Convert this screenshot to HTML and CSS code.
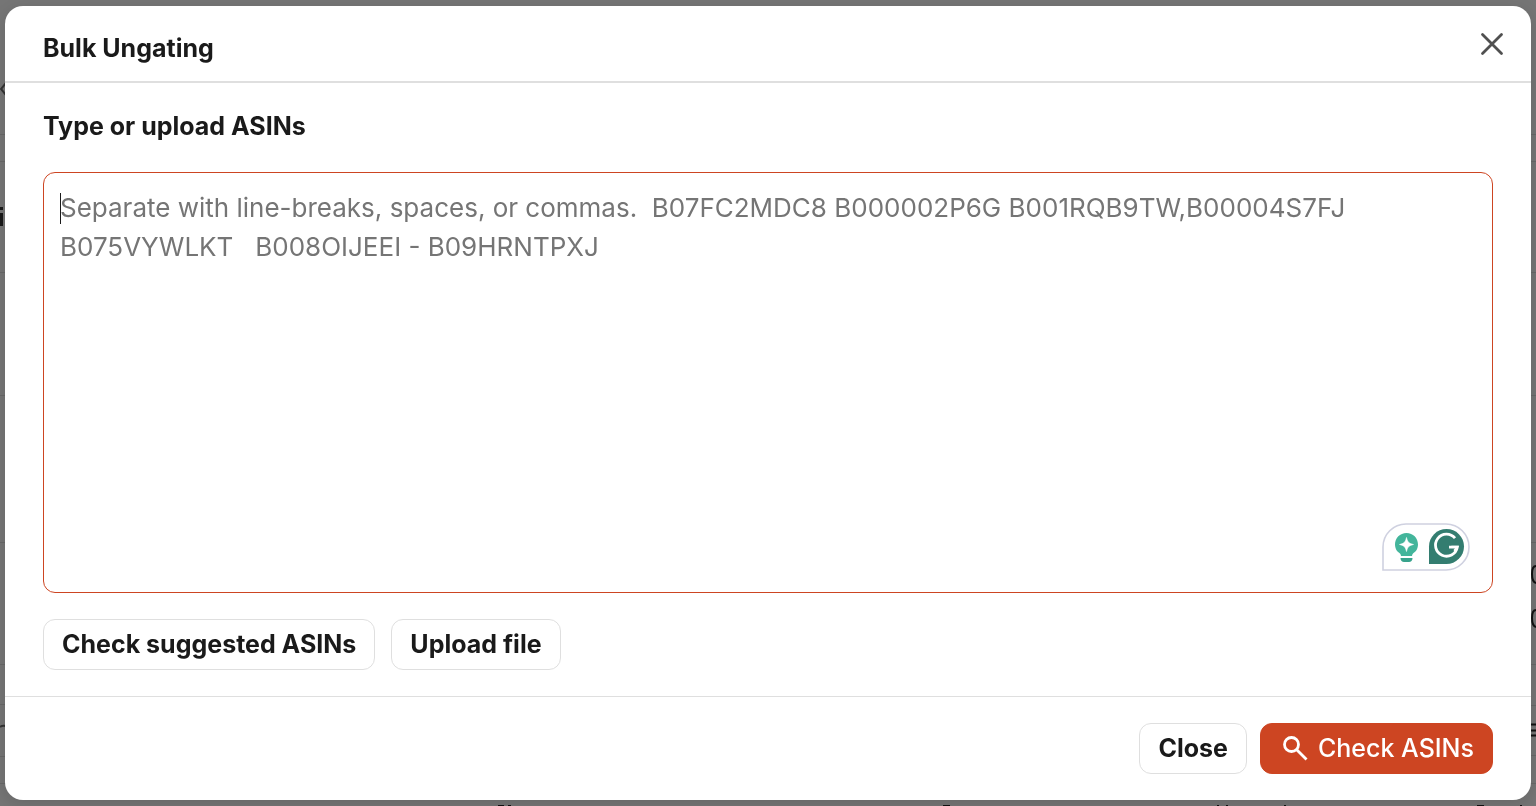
FILE: index.html
```html
<!DOCTYPE html>
<html lang="en">
<head>
<meta charset="utf-8">
<meta name="viewport" content="width=device-width, initial-scale=1">
<title>Bulk Ungating</title>
<link rel="stylesheet" href="styles.css">
</head>
<body class="page">
  <div class="backdrop" aria-hidden="true">
    <svg class="backdrop-edge" width="6" height="806" viewBox="0 0 6 806">
      <g stroke="#686868"><path d="M0 134.5H6M0 161.5H6M0 272.5H6M0 395.5H6M0 542.5H6M0 664.5H6M0 704.5H6M0 756.5H6M0 783.5H6"/></g>
      <path d="M6 83L1 89L6 95" fill="none" stroke="#333" stroke-width="2"/>
      <path d="M0 207H3V210H0zM0 213H3V226H0z" fill="#191919"/>
      <path d="M0 727Q2 725 6 726" fill="none" stroke="#333" stroke-width="2"/>
    </svg>
    <svg class="backdrop-edge backdrop-right" width="6" height="806" viewBox="0 0 6 806">
      <g stroke="#686868"><path d="M0 134.5H6M0 161.5H6M0 272.5H6M0 395.5H6M0 542.5H6M0 664.5H6M0 705.5H6M0 755.5H6M0 783.5H6"/></g>
      <path d="M6 566Q2 566 2 574Q2 582 6 583M6 610Q2 610 2 618Q2 626 6 627" fill="none" stroke="#111" stroke-width="2"/>
      <path d="M0 724.5H6M0 730.5H6M1 735.5H6" fill="none" stroke="#111" stroke-width="2"/>
    </svg>
    <svg class="backdrop-bottom" width="1536" height="2" viewBox="0 0 1536 2">
      <path d="M498 1.5H504M508 1.5H511M943 1.5H950M1217 1.5H1219M1226 1.5H1228M1284 1.5H1286M1477 1.5H1484M1520 1.5H1522" stroke="#111" stroke-width="1"/>
    </svg>
  </div>

  <main class="modal" role="dialog" aria-modal="true" aria-labelledby="modal-title">
    <header class="modal-header">
      <h1 class="modal-title" id="modal-title">Bulk Ungating</h1>
      <button class="icon-button" type="button" aria-label="Close dialog">
        <svg width="24" height="24" viewBox="0 0 24 24" fill="none" stroke="#505050" stroke-width="2.8" stroke-linecap="round"><path d="M2.500 2.500L21.500 21.500M21.500 2.500L2.500 21.500"/></svg>
      </button>
    </header>

    <section class="modal-body">
      <label class="field-label" for="asins">Type or upload ASINs</label>
      <div class="field">
        <textarea class="field-input" id="asins" placeholder="Separate with line-breaks, spaces, or commas.  B07FC2MDC8 B000002P6G B001RQB9TW,B00004S7FJ&#10;B075VYWLKT   B008OIJEEI - B09HRNTPXJ"></textarea>
        <span class="caret"></span>
        <div class="assistant">
          <svg width="88" height="48" viewBox="0 0 88 48" role="img" aria-label="Writing assistant">
            <path d="M1 47V24A23 23 0 0 1 24 1H64A23 23 0 0 1 64 47Z" fill="#fff" stroke="#cfd1e0" stroke-width="1.6"/>
            <path d="M24.500 10C31 10 36 15 36 21.500C36 26 33.500 29 31 30.500Q30 31.500 30 33H19Q19 31.500 18 30.500C15.500 29 13 26 13 21.500C13 15 18 10 24.500 10Z" fill="#43b59b"/>
            <path d="M24.500 14.500C25.500 19 27 20.500 31.500 21.500C27 22.500 25.500 24 24.500 28.500C23.500 24 22 22.500 17.500 21.500C22 20.500 23.500 19 24.500 14.500Z" fill="#fff" stroke="#fff" stroke-width=".6"/>
            <path d="M18.500 35H30.500C30.500 37.500 29 39 27 39H22C20 39 18.500 37.500 18.500 35Z" fill="#38a38c"/>
            <path d="M47 41V23.500A17.500 17.500 0 1 1 64.500 41Z" fill="#337d70"/>
            <path d="M73 15.200A11 11 0 1 0 75.300 24.200H67" fill="none" stroke="#fff" stroke-width="2.800"/>
            <path d="M69 22.800H76.800L73.500 30L71.500 27L73.500 24.500Z" fill="#fff"/>
          </svg>
        </div>
      </div>
      <div class="actions">
        <button class="button" type="button">Check suggested ASINs</button>
        <button class="button" type="button">Upload file</button>
      </div>
    </section>

    <footer class="modal-footer">
      <button class="button" type="button">Close</button>
      <button class="button button-primary" type="button">
        <svg width="26" height="26" viewBox="0 0 26 26" fill="none" stroke="#fff" stroke-width="2.8"><circle cx="9.500" cy="8.500" r="7"/><path d="M14.500 13.500L24.500 23.500"/></svg>
        Check ASINs
      </button>
    </footer>
  </main>
</body>
</html>
```
FILE: styles.css
```css
* {
  box-sizing: border-box;
}

.page {
  display: flex;
  min-height: 100vh;
  margin: 0;
  padding: 6px 5px;
  background: #757575;
  color: #1a1a1a;
  font-family: Inter, "Liberation Sans", sans-serif;
  font-size: 26px;
  font-variation-settings: "opsz" 32;
  line-height: 39px;
}

.backdrop {
  position: fixed;
  inset: 0;
  overflow: hidden;
}

.backdrop-edge {
  position: absolute;
  top: 0;
  left: 0;
}

.backdrop-right {
  right: 0;
  left: auto;
}

.backdrop-bottom {
  position: absolute;
  bottom: 0;
  left: 0;
}

.modal {
  position: relative;
  display: flex;
  flex: 1;
  flex-direction: column;
  overflow: hidden;
  border-radius: 18px;
  background: #fff;
  box-shadow: 0 4px 16px rgba(0, 0, 0, 0.12);
}

.modal-header {
  display: flex;
  align-items: flex-start;
  justify-content: space-between;
  padding: 26px 27px 16px 38px;
  border-bottom: 2px solid #dfdfdf;
}

.modal-title {
  margin: 0;
  font-size: 25px;
  font-weight: 700;
  line-height: 33px;
}

.icon-button {
  display: flex;
  padding: 0;
  border: 0;
  background: none;
}

.modal-body {
  display: flex;
  flex: 1;
  flex-direction: column;
  padding: 24px 38px 26px;
}

.field-label {
  font-size: 25px;
  font-weight: 700;
}

.field {
  position: relative;
  display: flex;
  flex: 1;
  margin-top: 26px;
}

.field-input {
  flex: 1;
  min-width: 0;
  padding: 15px 16px;
  border: 1px solid #cd4522;
  border-radius: 12px;
  outline: 0;
  background: #fff;
  color: #1a1a1a;
  font: inherit;
  font-variation-settings: inherit;
  resize: none;
}

.field-input::placeholder {
  color: #757575;
  opacity: 1;
}

.caret {
  position: absolute;
  top: 21px;
  left: 17px;
  width: 1px;
  height: 31px;
  background: #1a1a1a;
}

.assistant {
  position: absolute;
  right: 23px;
  bottom: 22px;
  display: flex;
}

.actions {
  display: flex;
  gap: 16px;
  margin-top: 26px;
}

.button {
  display: flex;
  align-items: center;
  gap: 10px;
  padding: 5px 18px;
  border: 1px solid #dfdfdf;
  border-radius: 12px;
  background: #fff;
  color: #1a1a1a;
  font: inherit;
  font-size: 25px;
  font-weight: 700;
}

.button-primary {
  padding-left: 21px;
  border-color: #cd4522;
  background: #cd4522;
  color: #fff;
  font-weight: 500;
}

.modal-footer {
  display: flex;
  justify-content: flex-end;
  gap: 13px;
  padding: 26px 38px;
  border-top: 1px solid #dfdfdf;
}
```
